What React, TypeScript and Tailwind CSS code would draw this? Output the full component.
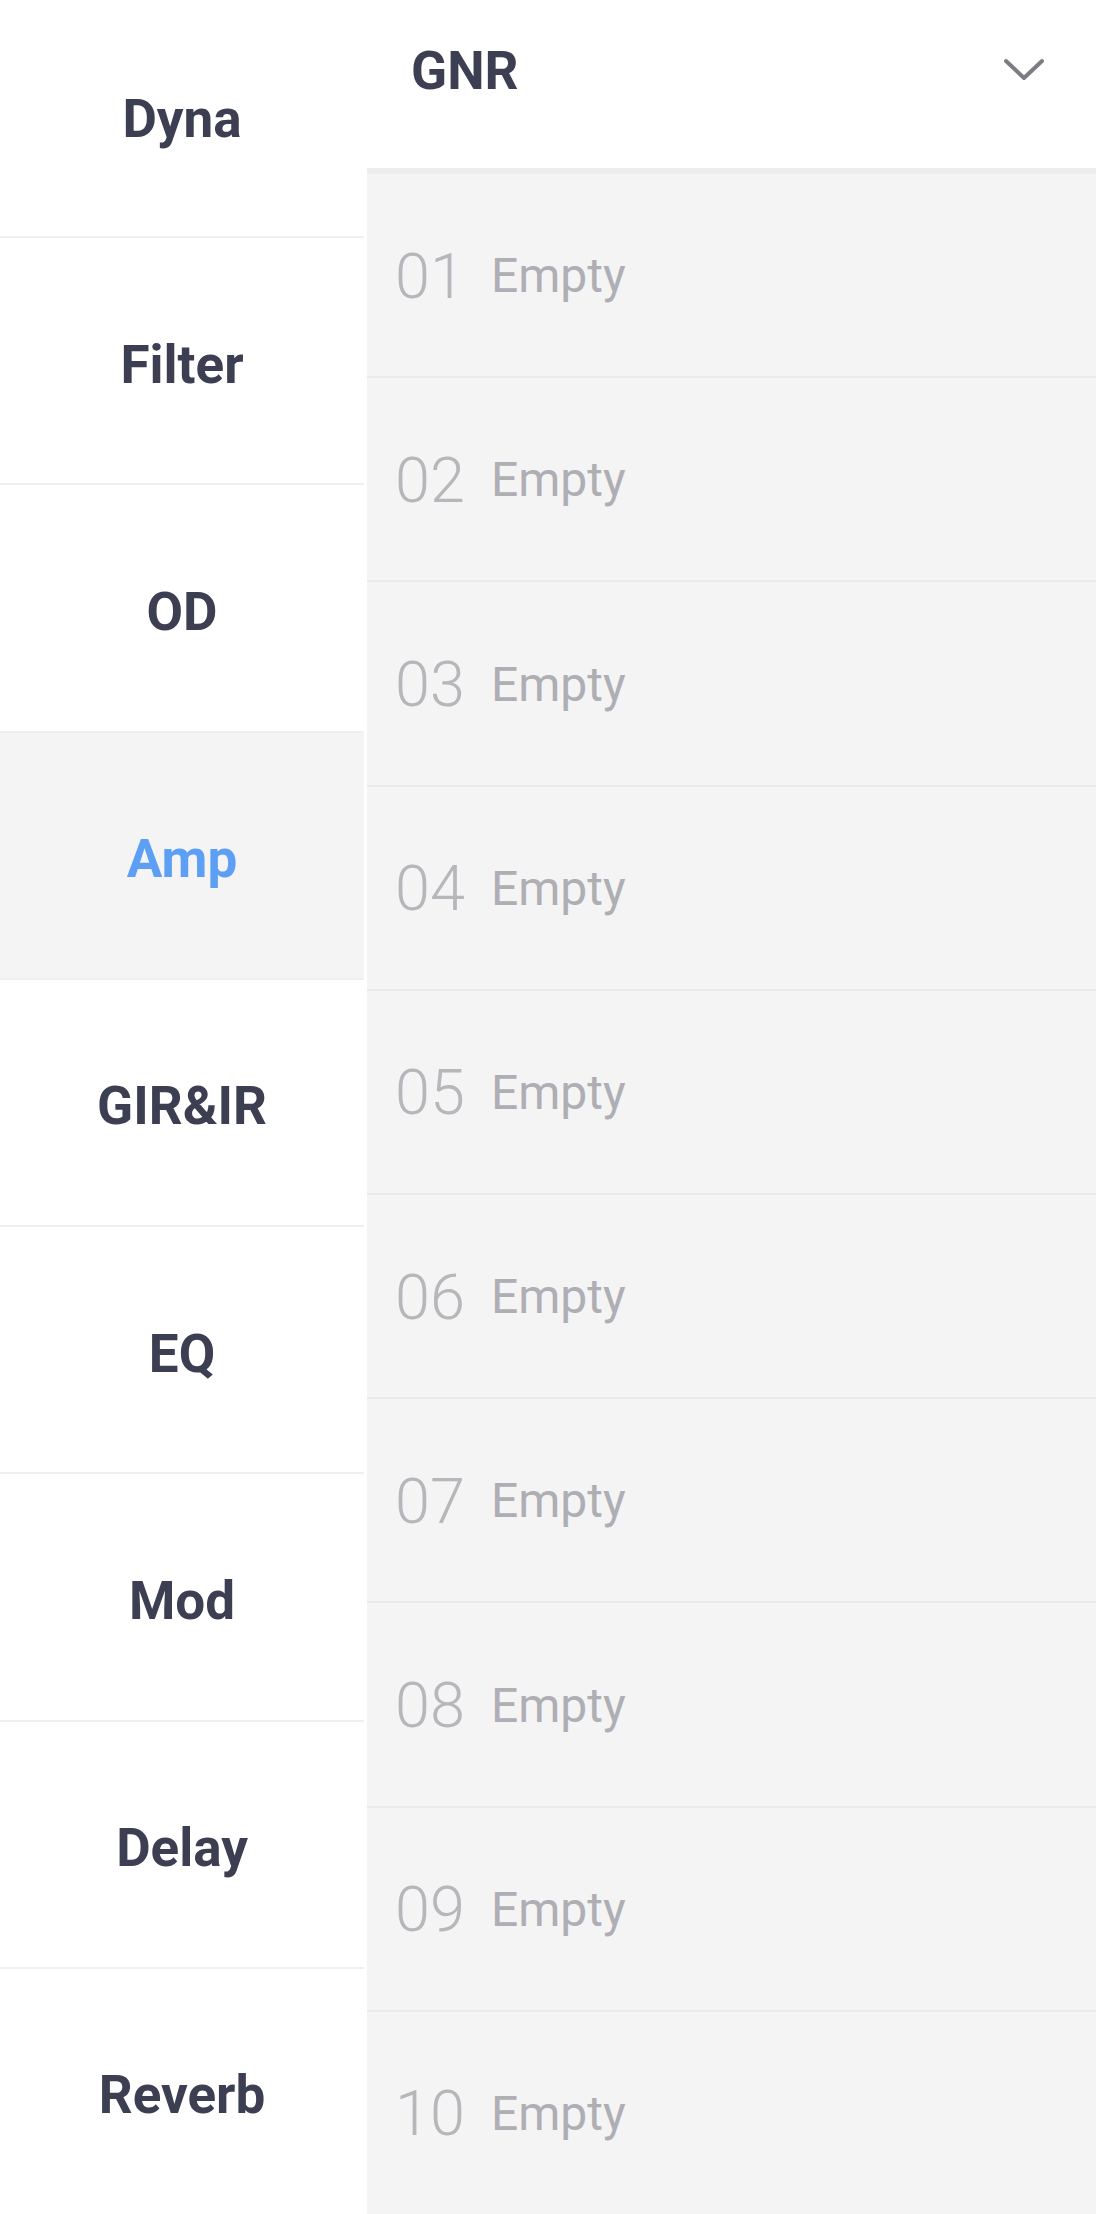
import React from 'react';

const categories = ['Dyna', 'Filter', 'OD', 'Amp', 'GIR&IR', 'EQ', 'Mod', 'Delay', 'Reverb'];
const slots = Array.from({ length: 10 }, (_, i) => String(i + 1).padStart(2, '0'));

const ChevronDown: React.FC = () => (
  <svg width="44" height="26" viewBox="0 0 44 26" fill="none" className="shrink-0">
    <polyline
      points="4,4 22,21 40,4"
      stroke="#7b7c84"
      strokeWidth="4"
      strokeLinecap="round"
      strokeLinejoin="round"
    />
  </svg>
);

const App: React.FC = () => {
  const active = 'Amp';

  return (
    <div className="flex h-[2214px] w-[1096px] overflow-hidden bg-white font-['Roboto',sans-serif]">
      {/* category list */}
      <div className="mr-[3px] flex w-[364px] shrink-0 flex-col">
        {categories.map((name, i) => {
          const isActive = name === active;
          return (
            <div
              key={name}
              className={`flex items-center justify-center border-[#efeff1] ${
                i === 0 ? 'h-[238px] shrink-0 border-b-2 pt-[2px]' : 'flex-1 pt-[9px]'
              } ${i > 0 && i < categories.length - 1 ? 'border-b-2' : ''} ${
                isActive ? 'bg-[#f4f4f5]' : 'bg-white'
              }`}
            >
              <span
                className={`text-[53px] font-bold leading-none ${
                  isActive ? 'text-[#5d9ff5]' : 'text-[#3c3e51]'
                }`}
              >
                {name}
              </span>
            </div>
          );
        })}
      </div>

      {/* preset slots */}
      <div className="flex flex-1 flex-col bg-[#f4f4f4]">
        <div className="flex h-[168px] shrink-0 items-start justify-between bg-white pl-[44px] pr-[50px] pt-[45px]">
          <span className="text-[53px] font-bold leading-none text-[#3c3e51]">GNR</span>
          <div className="pt-[12px]">
            <ChevronDown />
          </div>
        </div>
        <div className="h-[6px] shrink-0 bg-[#ededee]" />
        {slots.map((num, i) => (
          <div
            key={num}
            className={`flex flex-1 items-center pl-[28px] pt-[2px] ${
              i < slots.length - 1 ? 'border-b-2 border-[#eaeaec]' : ''
            }`}
          >
            <span className="text-[63px] font-light leading-none text-[#b6b6bb]">{num}</span>
            <span className="ml-[26px] text-[48px] leading-none text-[#aeaeb4]">Empty</span>
          </div>
        ))}
      </div>
    </div>
  );
};

export default App;
